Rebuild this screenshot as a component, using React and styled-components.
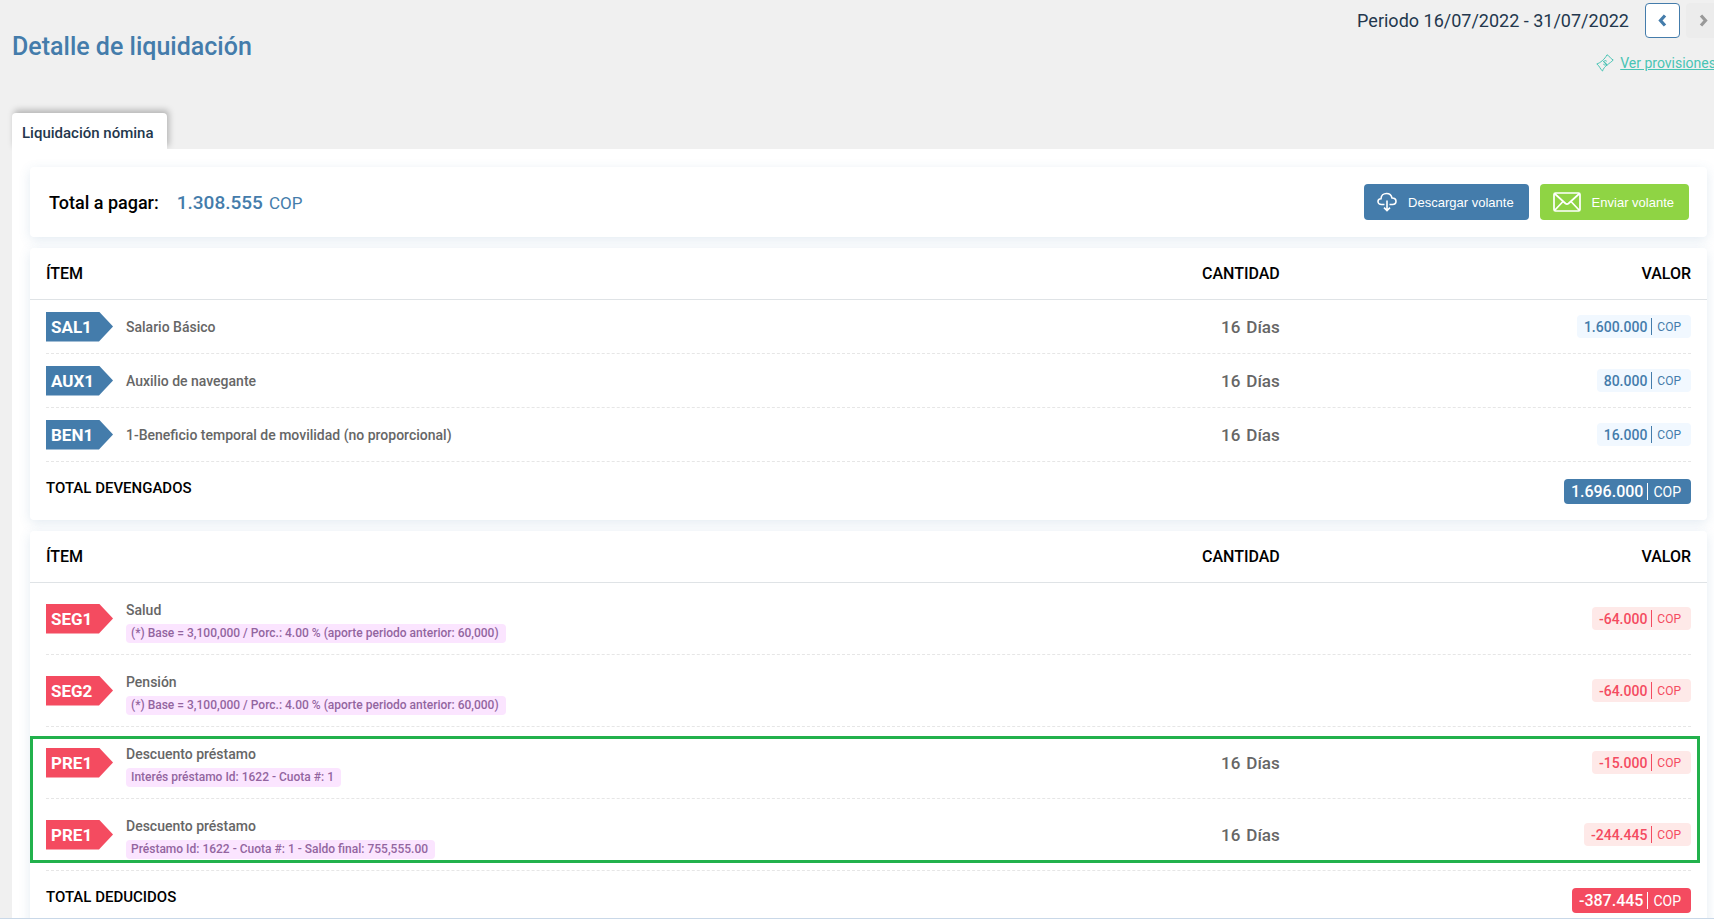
import React from "react";
import styled, { createGlobalStyle, ThemeProvider } from "styled-components";

const theme = {
  blue: "#447cab",
  blueSoft: "#f1f8ff",
  red: "#f44b60",
  redSoft: "#fee9e8",
  green: "#8fd444",
  teal: "#48c4b4",
  navy: "#23374d",
  gray: "#666666",
  highlight: "#22b14c",
};

const GlobalStyle = createGlobalStyle`
  *, *::before, *::after {
    box-sizing: border-box;
  }
  body {
    margin: 0;
    background: #f0f0f0;
    font-family: Roboto, "Liberation Sans", sans-serif;
    color: #000;
  }
`;

const Page = styled.div`
  height: 100vh;
  overflow: hidden;
  padding-left: 12px;
  border-bottom: 1px solid #c9d8e8;
`;

const Header = styled.header`
  display: flex;
  justify-content: space-between;
  height: 113px;
  margin-right: -7px;
  padding-top: 3px;
`;

const Title = styled.h1`
  margin: 28px 0 0;
  font-size: 25px;
  line-height: 32px;
  font-weight: 500;
  color: ${({ theme }) => theme.blue};
`;

const HeaderSide = styled.div`
  display: flex;
  flex-direction: column;
  align-items: flex-end;
  gap: 15px;
`;

const Period = styled.div`
  display: flex;
  align-items: center;
  gap: 6px;
  font-size: 18px;
  color: ${({ theme }) => theme.navy};
  span {
    margin-right: 10px;
  }
`;

const ArrowButton = styled.button`
  display: flex;
  align-items: center;
  justify-content: center;
  width: 35px;
  height: 35px;
  padding: 0;
  border-radius: 4px;
  border: 1px solid ${({ theme }) => theme.blue};
  background: #fff;
  color: ${({ theme }) => theme.blue};
  cursor: pointer;
  &:disabled {
    border-color: #ececec;
    background: #ececec;
    color: #999;
    cursor: default;
  }
`;

const ProvisionsLink = styled.a`
  display: flex;
  align-items: center;
  gap: 6px;
  margin-right: 5px;
  font-size: 14px;
  line-height: 20px;
  color: ${({ theme }) => theme.teal};
`;

const Tabs = styled.nav`
  display: flex;
`;

const Tab = styled.button`
  height: 36px;
  padding: 4px 13px 0 10px;
  border: none;
  border-radius: 4px 4px 0 0;
  background: #fff;
  box-shadow: 2px -3px 6px rgba(0, 0, 0, 0.25);
  font-family: inherit;
  font-size: 15px;
  font-weight: 500;
  color: ${({ theme }) => theme.navy};
`;

const Panel = styled.main`
  position: relative;
  display: flex;
  flex-direction: column;
  gap: 11px;
  padding: 18px 7px 18px 18px;
  background: #fff;
`;

const Card = styled.section`
  border-radius: 4px;
  background: #fff;
  box-shadow: 0 3px 12px rgba(68, 124, 171, 0.15);
`;

const Summary = styled(Card)`
  display: flex;
  align-items: center;
  gap: 11px;
  height: 70px;
  padding: 0 18px 0 19px;
`;

const SummaryText = styled.div`
  display: flex;
  align-items: baseline;
  flex: 1;
  font-size: 18px;
  font-weight: 500;
`;

const SummaryAmount = styled.strong`
  margin: 0 6px 0 18px;
  font-size: 19px;
  font-weight: 500;
  color: ${({ theme }) => theme.blue};
`;

const SummaryCurrency = styled.span`
  font-size: 17px;
  font-weight: 400;
  color: ${({ theme }) => theme.blue};
`;

const ActionButton = styled.button`
  display: flex;
  align-items: center;
  gap: 11px;
  height: 36px;
  padding: 0 15px 0 13px;
  border: none;
  border-radius: 4px;
  background: ${({ theme, tone }) => theme[tone]};
  color: #fff;
  font-family: "Liberation Sans", Arial, sans-serif;
  font-size: 13px;
  cursor: pointer;
`;

const Table = styled.table`
  display: block;
`;

const Head = styled.thead`
  display: block;
  border-bottom: 1px solid #dfe3e6;
`;

const Body = styled.tbody`
  position: relative;
  display: block;
  ${({ $highlighted, theme }) =>
    $highlighted &&
    `
    &::after {
      content: "";
      position: absolute;
      top: 9px;
      right: 7px;
      bottom: 8px;
      left: 0;
      border: 3px solid ${theme.highlight};
      pointer-events: none;
    }
  `}
`;

const Foot = styled.tfoot`
  display: block;
`;

const Row = styled.tr`
  display: grid;
  grid-template-columns: 2fr 1fr 1fr;
  align-items: center;
  margin: 0 16px;
`;

const HeadRow = styled(Row)`
  height: 51px;
`;

const ItemRow = styled(Row)`
  height: ${({ $height }) => $height}px;
  border-bottom: 1px dashed #e6e6e6;
`;

const TotalRow = styled(Row)`
  grid-template-columns: 1fr auto;
  align-items: start;
  height: 58px;
  padding-top: 17px;
`;

const HeadCell = styled.th`
  padding: 0;
  text-align: ${({ $align }) => $align || "left"};
  font-size: 16px;
  font-weight: 500;
`;

const Cell = styled.td`
  display: flex;
  align-items: center;
  justify-content: ${({ $end }) => ($end ? "flex-end" : "flex-start")};
  gap: 13px;
  padding: 0;
`;

const Quantity = styled(Cell)`
  gap: 6px;
  font-size: 17px;
  font-weight: 500;
  color: ${({ theme }) => theme.gray};
`;

const TotalLabel = styled.th`
  padding: 0;
  text-align: left;
  font-size: 15px;
  line-height: 18px;
  font-weight: 500;
`;

const Code = styled.span`
  width: 67px;
  padding-left: 5px;
  background: ${({ theme, $tone }) => theme[$tone]};
  clip-path: polygon(0 0, 53px 0, 100% 50%, 53px 100%, 0 100%);
  color: #fff;
  font-size: 17px;
  line-height: 30px;
  font-weight: 700;
`;

const Description = styled.div`
  display: flex;
  flex-direction: column;
  align-items: flex-start;
  gap: 5px;
  padding-top: ${({ $hasNote }) => ($hasNote ? 6 : 0)}px;
  font-size: 14px;
  line-height: 18px;
  font-weight: 500;
  color: ${({ theme }) => theme.gray};
`;

const Note = styled.small`
  padding: 0 7px 0 5px;
  border-radius: 4px;
  background: #fbe5ff;
  color: #93659f;
  font-size: 12px;
  line-height: 19px;
`;

const Amount = styled.span`
  display: flex;
  align-items: center;
  height: 23px;
  padding: 0 10px 0 7px;
  border-radius: 4px;
  background: ${({ theme, $tone }) => theme[`${$tone}Soft`]};
  color: ${({ theme, $tone }) => theme[$tone]};
  font-size: 14px;
  font-weight: 500;
`;

const TotalAmount = styled(Amount)`
  height: 25px;
  background: ${({ theme, $tone }) => theme[$tone]};
  color: #fff;
  font-size: 16px;
`;

const Currency = styled.span`
  margin-left: 4px;
  padding: 2px 0 0 5px;
  border-left: 1px solid;
  font-size: ${({ $large }) => ($large ? 14 : 12)}px;
  line-height: 15px;
  font-weight: 400;
`;

const ChevronIcon = ({ points }) => (
  <svg width="9" height="13" viewBox="0 0 9 13" fill="none" stroke="currentColor" strokeWidth="3.2">
    <polyline points={points} />
  </svg>
);

const MoneyIcon = () => (
  <svg width="18" height="18" viewBox="0 0 18 18" fill="none" stroke="currentColor">
    <path d="M0.8 10C4 9 9 5 11 0.8C13 1.2 14 4.500 17.200 6C14 9.500 8 12 6.500 17C4.500 16 3.500 11.500 0.800 10Z" />
    <path d="M10.800 7.300C9.500 6 7.300 6.800 7.900 8.200C8.400 9.400 10.500 8.600 10.300 10.200C10 11.500 8.300 11.300 7.300 10.100M7 6.700L11.200 11.300" />
  </svg>
);

const CloudIcon = () => (
  <svg width="20" height="20" viewBox="0 0 20 20" fill="none" stroke="currentColor" strokeWidth="1.6">
    <path d="M7.500 12.500H4.500C2.500 12.500 1 11.300 1 9.500C1 7.800 2.300 6.800 4 6.700C4.100 3.500 6.500 1.500 9.500 1.500C12.500 1.500 14.500 3.300 15 6C17.500 6 19 7.300 19 9.300C19 11.300 17.500 12.500 15.500 12.500H12.500" />
    <path d="M10 8.500V18.500M7 15.700L10 18.600L13 15.700" />
  </svg>
);

const MailIcon = () => (
  <svg width="28" height="20" viewBox="0 0 28 20" fill="none" stroke="currentColor" strokeWidth="1.7">
    <rect x="1" y="1" width="26" height="18" rx="1.5" />
    <path d="M1.500 1.500L12.500 11.500Q14 12.700 15.500 11.500L26.500 1.500M1.500 18.500L10 9.500M26.500 18.500L18 9.500" />
  </svg>
);

const earnings = [
  { code: "SAL1", name: "Salario Básico", days: 16, value: "1.600.000" },
  { code: "AUX1", name: "Auxilio de navegante", days: 16, value: "80.000" },
  {
    code: "BEN1",
    name: "1-Beneficio temporal de movilidad (no proporcional)",
    days: 16,
    value: "16.000",
  },
];

const socialSecurity = [
  {
    code: "SEG1",
    name: "Salud",
    note: "(*) Base = 3,100,000 / Porc.: 4.00 % (aporte periodo anterior: 60,000)",
    value: "-64.000",
  },
  {
    code: "SEG2",
    name: "Pensión",
    note: "(*) Base = 3,100,000 / Porc.: 4.00 % (aporte periodo anterior: 60,000)",
    value: "-64.000",
  },
];

const loans = [
  {
    code: "PRE1",
    name: "Descuento préstamo",
    note: "Interés préstamo Id: 1622 - Cuota #: 1",
    days: 16,
    value: "-15.000",
  },
  {
    code: "PRE1",
    name: "Descuento préstamo",
    note: "Préstamo Id: 1622 - Cuota #: 1 - Saldo final: 755,555.00",
    days: 16,
    value: "-244.445",
  },
];

const Items = ({ items, tone, rowHeight, highlighted }) => (
  <Body $highlighted={highlighted}>
    {items.map(({ code, name, note, days, value }, index) => (
      <ItemRow key={index} $height={rowHeight}>
        <Cell>
          <Code $tone={tone}>{code}</Code>
          <Description $hasNote={Boolean(note)}>
            {name}
            {note && <Note>{note}</Note>}
          </Description>
        </Cell>
        <Quantity $end>
          {days && (
            <>
              <span>{days}</span>
              <span>Días</span>
            </>
          )}
        </Quantity>
        <Cell $end>
          <Amount $tone={tone}>
            {value}
            <Currency>COP</Currency>
          </Amount>
        </Cell>
      </ItemRow>
    ))}
  </Body>
);

const ItemsCard = ({ tone, totalLabel, total, children }) => (
  <Card>
    <Table>
      <Head>
        <HeadRow>
          <HeadCell>ÍTEM</HeadCell>
          <HeadCell $align="right">CANTIDAD</HeadCell>
          <HeadCell $align="right">VALOR</HeadCell>
        </HeadRow>
      </Head>
      {children}
      <Foot>
        <TotalRow>
          <TotalLabel>{totalLabel}</TotalLabel>
          <Cell $end>
            <TotalAmount $tone={tone}>
              {total}
              <Currency $large>COP</Currency>
            </TotalAmount>
          </Cell>
        </TotalRow>
      </Foot>
    </Table>
  </Card>
);

export default () => (
  <ThemeProvider theme={theme}>
    <GlobalStyle />
    <Page>
      <Header>
        <Title>Detalle de liquidación</Title>
        <HeaderSide>
          <Period>
            <span>Periodo 16/07/2022 - 31/07/2022</span>
            <ArrowButton aria-label="Periodo anterior">
              <ChevronIcon points="7,1.5 2.5,6.5 7,11.5" />
            </ArrowButton>
            <ArrowButton aria-label="Periodo siguiente" disabled>
              <ChevronIcon points="2,1.5 6.5,6.5 2,11.5" />
            </ArrowButton>
          </Period>
          <ProvisionsLink href="#provisiones">
            <MoneyIcon />
            Ver provisiones
          </ProvisionsLink>
        </HeaderSide>
      </Header>
      <Tabs>
        <Tab>Liquidación nómina</Tab>
      </Tabs>
      <Panel>
        <Summary>
          <SummaryText>
            Total a pagar:
            <SummaryAmount>1.308.555</SummaryAmount>
            <SummaryCurrency>COP</SummaryCurrency>
          </SummaryText>
          <ActionButton tone="blue">
            <CloudIcon />
            Descargar volante
          </ActionButton>
          <ActionButton tone="green">
            <MailIcon />
            Enviar volante
          </ActionButton>
        </Summary>
        <ItemsCard tone="blue" totalLabel="TOTAL DEVENGADOS" total="1.696.000">
          <Items items={earnings} tone="blue" rowHeight={54} />
        </ItemsCard>
        <ItemsCard tone="red" totalLabel="TOTAL DEDUCIDOS" total="-387.445">
          <Items items={socialSecurity} tone="red" rowHeight={72} />
          <Items items={loans} tone="red" rowHeight={72} highlighted />
        </ItemsCard>
      </Panel>
    </Page>
  </ThemeProvider>
);
